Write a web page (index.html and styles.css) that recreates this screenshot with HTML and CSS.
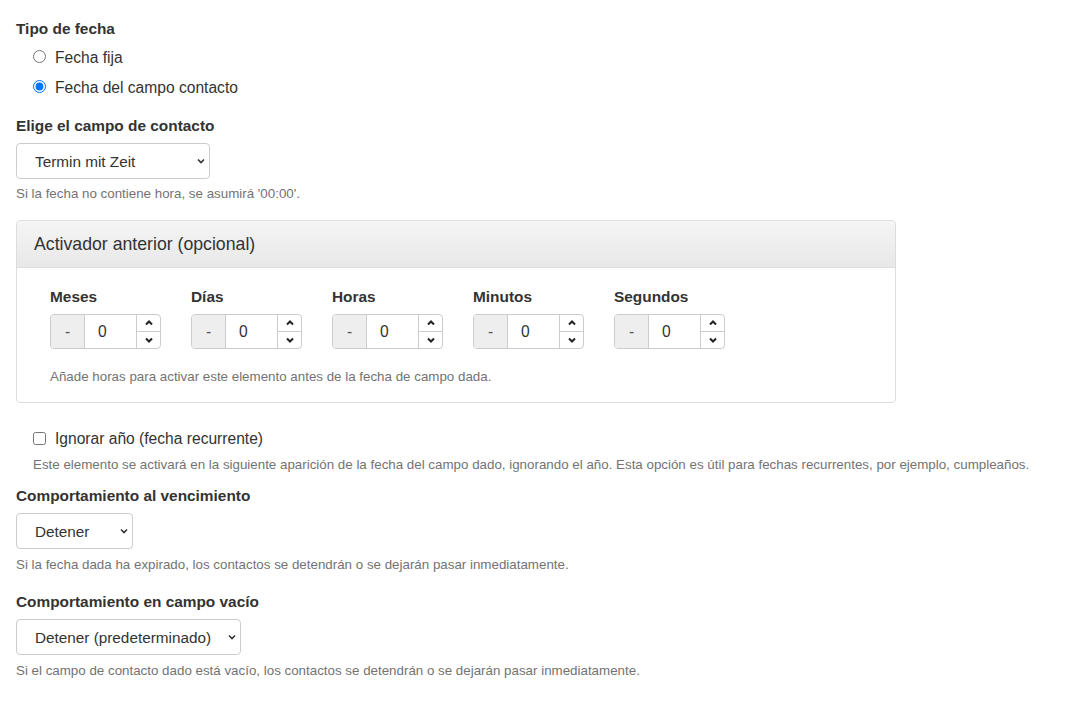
FILE: index.html
```html
<!DOCTYPE html>
<html>
<head>
<meta charset="utf-8">
<title>Activador de fecha</title>
<link rel="stylesheet" href="styles.css">
</head>
<body>
<div class="form">
    <div class="field">
        <div class="label">Tipo de fecha</div>
        <div class="options">
            <label class="option"><input type="radio" name="tipo"> <span>Fecha fija</span></label>
            <label class="option"><input type="radio" name="tipo" checked> <span>Fecha del campo contacto</span></label>
        </div>
    </div>

    <div class="field">
        <div class="label">Elige el campo de contacto</div>
        <div class="select select-wide">
            <select><option>Termin mit Zeit</option></select>
            <svg class="chev" width="10" height="10" viewBox="0 0 10 10"><path d="M2 3.5 L5 6.5 L8 3.5" fill="none" stroke="#333" stroke-width="1.6"/></svg>
        </div>
        <div class="help">Si la fecha no contiene hora, se asumirá '00:00'.</div>
    </div>

    <div class="panel">
        <div class="panel-heading">Activador anterior (opcional)</div>
        <div class="panel-body">
            <div class="units">
                <div class="unit">
                    <div class="label">Meses</div>
                    <div class="spin">
                        <span class="addon">-</span>
                        <input type="text" value="0">
                        <span class="arrows">
                            <span><svg width="10" height="8" viewBox="0 0 10 8"><path d="M2 5.5 L5 2.5 L8 5.5" fill="none" stroke="#222" stroke-width="2"/></svg></span>
                            <span><svg width="10" height="8" viewBox="0 0 10 8"><path d="M2 2.5 L5 5.5 L8 2.5" fill="none" stroke="#222" stroke-width="2"/></svg></span>
                        </span>
                    </div>
                </div>
                <div class="unit">
                    <div class="label">Días</div>
                    <div class="spin">
                        <span class="addon">-</span>
                        <input type="text" value="0">
                        <span class="arrows">
                            <span><svg width="10" height="8" viewBox="0 0 10 8"><path d="M2 5.5 L5 2.5 L8 5.5" fill="none" stroke="#222" stroke-width="2"/></svg></span>
                            <span><svg width="10" height="8" viewBox="0 0 10 8"><path d="M2 2.5 L5 5.5 L8 2.5" fill="none" stroke="#222" stroke-width="2"/></svg></span>
                        </span>
                    </div>
                </div>
                <div class="unit">
                    <div class="label">Horas</div>
                    <div class="spin">
                        <span class="addon">-</span>
                        <input type="text" value="0">
                        <span class="arrows">
                            <span><svg width="10" height="8" viewBox="0 0 10 8"><path d="M2 5.5 L5 2.5 L8 5.5" fill="none" stroke="#222" stroke-width="2"/></svg></span>
                            <span><svg width="10" height="8" viewBox="0 0 10 8"><path d="M2 2.5 L5 5.5 L8 2.5" fill="none" stroke="#222" stroke-width="2"/></svg></span>
                        </span>
                    </div>
                </div>
                <div class="unit">
                    <div class="label">Minutos</div>
                    <div class="spin">
                        <span class="addon">-</span>
                        <input type="text" value="0">
                        <span class="arrows">
                            <span><svg width="10" height="8" viewBox="0 0 10 8"><path d="M2 5.5 L5 2.5 L8 5.5" fill="none" stroke="#222" stroke-width="2"/></svg></span>
                            <span><svg width="10" height="8" viewBox="0 0 10 8"><path d="M2 2.5 L5 5.5 L8 2.5" fill="none" stroke="#222" stroke-width="2"/></svg></span>
                        </span>
                    </div>
                </div>
                <div class="unit">
                    <div class="label">Segundos</div>
                    <div class="spin">
                        <span class="addon">-</span>
                        <input type="text" value="0">
                        <span class="arrows">
                            <span><svg width="10" height="8" viewBox="0 0 10 8"><path d="M2 5.5 L5 2.5 L8 5.5" fill="none" stroke="#222" stroke-width="2"/></svg></span>
                            <span><svg width="10" height="8" viewBox="0 0 10 8"><path d="M2 2.5 L5 5.5 L8 2.5" fill="none" stroke="#222" stroke-width="2"/></svg></span>
                        </span>
                    </div>
                </div>
            </div>
            <div class="help panel-help">Añade horas para activar este elemento antes de la fecha de campo dada.</div>
        </div>
    </div>

    <div class="field check-field">
        <label class="option"><input type="checkbox"> <span>Ignorar año (fecha recurrente)</span></label>
        <div class="help">Este elemento se activará en la siguiente aparición de la fecha del campo dado, ignorando el año. Esta opción es útil para fechas recurrentes, por ejemplo, cumpleaños.</div>
    </div>

    <div class="field field-loose">
        <div class="label">Comportamiento al vencimiento</div>
        <div class="select select-short">
            <select><option>Detener</option></select>
            <svg class="chev" width="10" height="10" viewBox="0 0 10 10"><path d="M2 3.5 L5 6.5 L8 3.5" fill="none" stroke="#333" stroke-width="1.6"/></svg>
        </div>
        <div class="help">Si la fecha dada ha expirado, los contactos se detendrán o se dejarán pasar inmediatamente.</div>
    </div>

    <div class="field field-loose">
        <div class="label">Comportamiento en campo vacío</div>
        <div class="select select-mid">
            <select><option>Detener (predeterminado)</option></select>
            <svg class="chev" width="10" height="10" viewBox="0 0 10 10"><path d="M2 3.5 L5 6.5 L8 3.5" fill="none" stroke="#333" stroke-width="1.6"/></svg>
        </div>
        <div class="help">Si el campo de contacto dado está vacío, los contactos se detendrán o se dejarán pasar inmediatamente.</div>
    </div>
</div>
</body>
</html>
```

FILE: styles.css
```css
html, body {
    margin: 0;
    padding: 0;
}

body {
    font-family: "Helvetica Neue", "Liberation Sans", Arial, sans-serif;
    font-size: 15.6px;
    line-height: 20px;
    color: #333;
    background: #fff;
}

* {
    box-sizing: border-box;
}

.form {
    padding: 19px 16px;
}

.field {
    margin-bottom: 13px;
}

.field-loose {
    margin-bottom: 19px;
}

.label {
    font-weight: bold;
    font-size: 15.4px;
}

.options {
    padding-top: 4px;
}

.option {
    display: flex;
    align-items: center;
    gap: 9px;
    height: 30px;
    padding-left: 17px;
}

.option input {
    margin: 0;
    width: 13px;
    height: 13px;
    position: relative;
    top: -2px;
}

.select {
    position: relative;
    margin-top: 7px;
}

.select select {
    appearance: none;
    -webkit-appearance: none;
    font-family: inherit;
    font-size: 15.3px;
    color: #333;
    background: #fff;
    border: 1px solid #ccc;
    border-radius: 4px;
    height: 36px;
    padding: 0 18px;
    display: block;
}

.select-wide select { width: 194px; }
.select-short select { width: 117px; }
.select-mid select { width: 225px; }

.select .chev {
    position: absolute;
    top: 13px;
    pointer-events: none;
}

.select-wide .chev { left: 180px; }
.select-short .chev { left: 103px; }
.select-mid .chev { left: 211px; }

.help {
    font-size: 13.35px;
    line-height: 17px;
    color: #737373;
    margin-top: 6px;
}

.field-loose .help {
    margin-top: 7px;
}

.panel {
    margin-top: 18px;
    border: 1px solid #ddd;
    border-radius: 4px;
    width: 880px;
    margin-bottom: 25px;
}

.panel-heading {
    height: 47px;
    padding: 0 17px;
    display: flex;
    align-items: center;
    font-size: 17.7px;
    background: linear-gradient(#f5f5f5, #e8e8e8);
    border-bottom: 1px solid #ddd;
    border-radius: 3px 3px 0 0;
}

.panel-body {
    padding: 19px 33px 17px;
}

.units {
    display: flex;
    gap: 30px;
}

.unit {
    width: 111px;
}

.spin {
    display: flex;
    height: 35px;
    margin-top: 7px;
    border: 1px solid #ccc;
    border-radius: 4px;
    overflow: hidden;
}

.addon {
    width: 34px;
    background: #eee;
    border-right: 1px solid #ccc;
    display: flex;
    align-items: center;
    justify-content: center;
    color: #555;
}

.spin input {
    width: 51px;
    border: none;
    font: inherit;
    color: #333;
    padding: 0 0 0 13px;
    outline: none;
}

.arrows {
    flex: 1;
    display: flex;
    flex-direction: column;
    border-left: 1px solid #ccc;
}

.arrows span {
    flex: 1;
    display: flex;
    align-items: center;
    justify-content: center;
}

.arrows span + span {
    border-top: 1px solid #ccc;
}

.panel-help {
    margin-top: 19px;
}

.check-field .option {
    height: 22px;
}

.check-field .option input {
    top: -1px;
}

.check-field .help {
    margin-top: 6px;
    padding-left: 17px;
}
```
